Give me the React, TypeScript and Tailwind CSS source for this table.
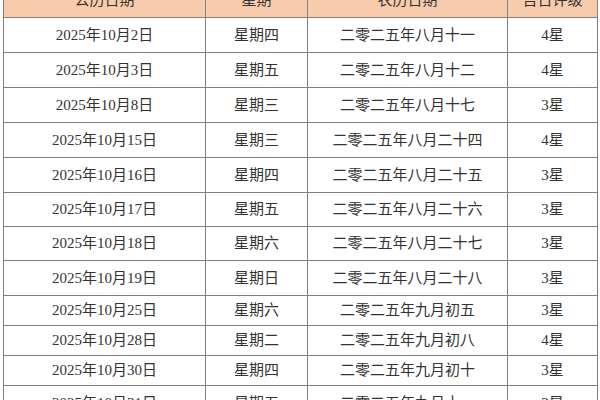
import React from "react";

const rows: [string, string, string, string, number][] = [
  ["2025年10月2日", "星期四", "二零二五年八月十一", "4星", 35],
  ["2025年10月3日", "星期五", "二零二五年八月十二", "4星", 35],
  ["2025年10月8日", "星期三", "二零二五年八月十七", "3星", 35],
  ["2025年10月15日", "星期三", "二零二五年八月二十四", "4星", 35],
  ["2025年10月16日", "星期四", "二零二五年八月二十五", "3星", 35],
  ["2025年10月17日", "星期五", "二零二五年八月二十六", "3星", 34],
  ["2025年10月18日", "星期六", "二零二五年八月二十七", "3星", 34],
  ["2025年10月19日", "星期日", "二零二五年八月二十八", "3星", 35],
  ["2025年10月25日", "星期六", "二零二五年九月初五", "3星", 30],
  ["2025年10月28日", "星期二", "二零二五年九月初八", "4星", 30],
  ["2025年10月30日", "星期四", "二零二五年九月初十", "3星", 30],
  ["2025年10月31日", "星期五", "二零二五年九月十一", "3星", 35],
];

const cell = "border border-[#808080] text-center align-middle p-0";

export default function App() {
  return (
    <div
      className="w-[600px] h-[400px] overflow-hidden bg-white text-[15px] text-[#333]"
      style={{ fontFamily: '"Liberation Serif", "Noto Sans CJK SC", serif' }}
    >
      <table className="ml-[3px] mt-[-18px] border-collapse table-fixed w-[594px]">
        <colgroup>
          <col className="w-[202px]" />
          <col className="w-[102px]" />
          <col className="w-[200px]" />
          <col className="w-[90px]" />
        </colgroup>
        <thead>
          <tr className="h-[35px] bg-[#f8cbad]">
            <th className={`${cell} font-normal`}>公历日期</th>
            <th className={`${cell} font-normal`}>星期</th>
            <th className={`${cell} font-normal`}>农历日期</th>
            <th className={`${cell} font-normal`}>吉日评级</th>
          </tr>
        </thead>
        <tbody>
          {rows.map((r) => (
            <tr key={r[0]} style={{ height: r[4] }}>
              <td className={cell}>{r[0]}</td>
              <td className={cell}>{r[1]}</td>
              <td className={cell}>{r[2]}</td>
              <td className={cell}>{r[3]}</td>
            </tr>
          ))}
        </tbody>
      </table>
    </div>
  );
}
